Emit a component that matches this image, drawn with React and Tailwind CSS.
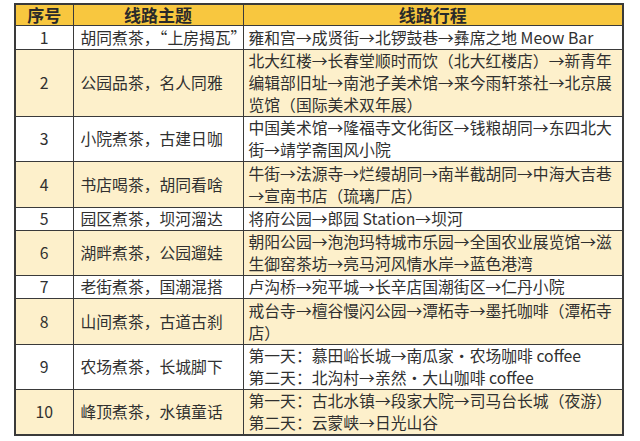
const rows = [
  { n: "1", theme: "胡同煮茶，“上房揭瓦”", lines: ["雍和宫→成贤街→北锣鼓巷→彝席之地 Meow Bar"], h: "h-[24px]" },
  {
    n: "2",
    theme: "公园品茶，名人同雅",
    lines: ["北大红楼→长春堂顺时而饮（北大红楼店）→新青年", "编辑部旧址→南池子美术馆→来今雨轩茶社→北京展", "览馆（国际美术双年展）"],
    h: "h-[67px]",
  },
  { n: "3", theme: "小院煮茶，古建日咖", lines: ["中国美术馆→隆福寺文化街区→钱粮胡同→东四北大", "街→靖学斋国风小院"], h: "h-[45px]" },
  { n: "4", theme: "书店喝茶，胡同看啥", lines: ["牛街→法源寺→烂缦胡同→南半截胡同→中海大吉巷", "→宣南书店（琉璃厂店）"], h: "h-[46px]" },
  { n: "5", theme: "园区煮茶，坝河溜达", lines: ["将府公园→郎园 Station→坝河"], h: "h-[23px]" },
  { n: "6", theme: "湖畔煮茶，公园遛娃", lines: ["朝阳公园→泡泡玛特城市乐园→全国农业展览馆→滋", "生御窑茶坊→亮马河风情水岸→蓝色港湾"], h: "h-[45px]" },
  { n: "7", theme: "老街煮茶，国潮混搭", lines: ["卢沟桥→宛平城→长辛店国潮街区→仁丹小院"], h: "h-[23px]" },
  { n: "8", theme: "山间煮茶，古道古刹", lines: ["戒台寺→檀谷慢闪公园→潭柘寺→墨托咖啡（潭柘寺", "店）"], h: "h-[46px]" },
  { n: "9", theme: "农场煮茶，长城脚下", lines: ["第一天：慕田峪长城→南瓜家·农场咖啡 coffee", "第二天：北沟村→亲然·大山咖啡 coffee"], h: "h-[44px]" },
  { n: "10", theme: "峰顶煮茶，水镇童话", lines: ["第一天：古北水镇→段家大院→司马台长城（夜游）", "第二天：云蒙峡→日光山谷"], h: "h-[45px]" },
];

export default function App() {
  return (
    <div
      className="w-[640px] h-[441px] bg-white pt-[3px] pl-[14px] text-[#303030]"
      style={{ fontFamily: '"Noto Sans CJK SC", "Noto Sans", sans-serif' }}
    >
      <table className="border-collapse border-2 border-[#3a3a3a] table-fixed w-[608px] text-[15.8px] leading-[22px]">
        <colgroup>
          <col className="w-[58px]" />
          <col className="w-[170px]" />
          <col className="w-[380px]" />
        </colgroup>
        <thead>
          <tr className="h-[21px] bg-[#f8c73f] font-bold text-[17px] leading-[20px] text-[#2a2a2a]">
            <th className="border border-[#3a3a3a] p-0">序号</th>
            <th className="border border-[#3a3a3a] p-0">线路主题</th>
            <th className="border border-[#3a3a3a] p-0">线路行程</th>
          </tr>
        </thead>
        <tbody>
          {rows.map((r, i) => (
            <tr key={r.n} className={`${r.h} ${i % 2 === 1 ? "bg-[#fdf0cb]" : "bg-white"}`}>
              <td className="border border-[#3a3a3a] p-0 text-center">{r.n}</td>
              <td className="border border-[#3a3a3a] p-0 pl-[7px] whitespace-nowrap">{r.theme}</td>
              <td className="border border-[#3a3a3a] p-0 pl-[5px] whitespace-nowrap">
                {r.lines.map((l) => (
                  <div key={l}>{l}</div>
                ))}
              </td>
            </tr>
          ))}
        </tbody>
      </table>
    </div>
  );
}
